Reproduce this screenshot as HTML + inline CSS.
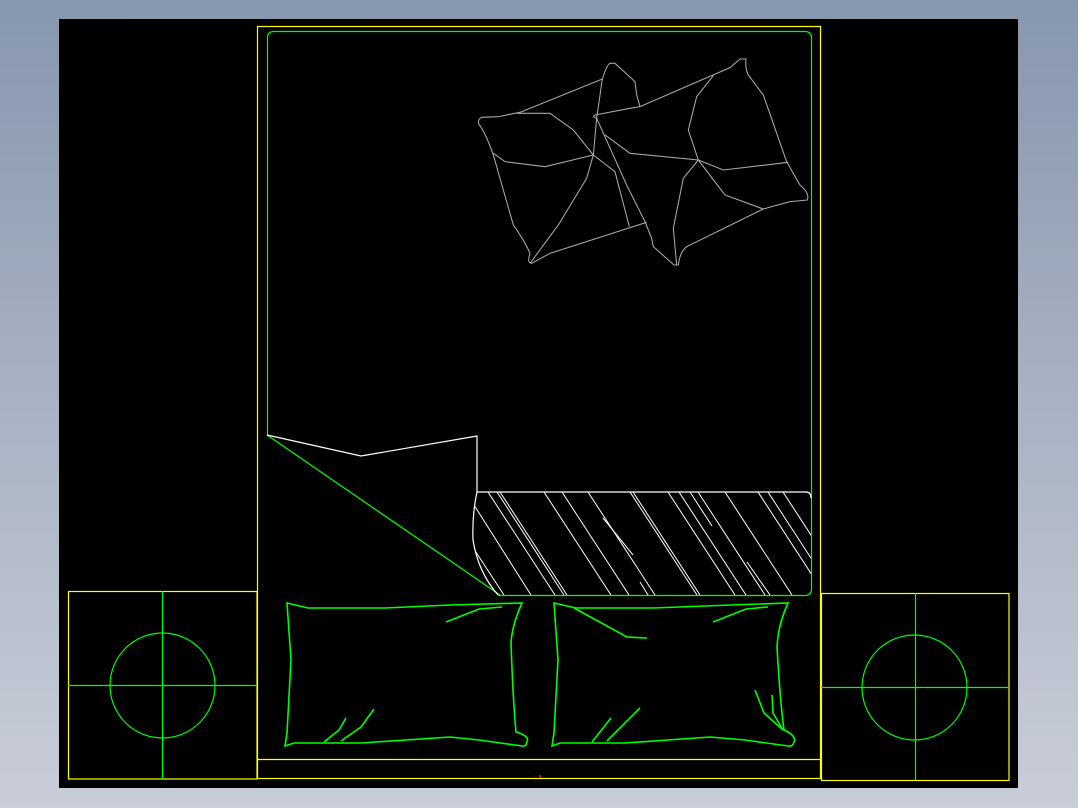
<!DOCTYPE html>
<html><head><meta charset="utf-8"><style>
html,body{margin:0;padding:0;width:1078px;height:808px;overflow:hidden;background:linear-gradient(#8797ad,#c9cdd8);}
svg{position:absolute;left:0;top:0}
</style></head><body>
<svg width="1078" height="808" viewBox="0 0 1078 808">
<defs><clipPath id="hc"><path d="M477,492 L806,492 Q811,492 811,498 L811,589 Q811,595 805,595 L498,595 Q480,575 473,540 Q472,515 477,492Z"/></clipPath></defs>
<rect x="59" y="19" width="959" height="769" fill="#000"/>
<g fill="none" stroke-width="1.2">
<!-- bed frame -->
<rect x="257.5" y="26.5" width="563" height="752" stroke="#ffff00"/>
<line x1="257" y1="759.5" x2="821" y2="759.5" stroke="#ffff00"/>
<path d="M267.5,435 L267.5,38 Q267.5,31.5 274,31.5 L805,31.5 Q811.5,31.5 811.5,38 L811.5,589 Q811.5,595.5 805,595.5 L498,595.5" stroke="#00ff00"/>
<line x1="267" y1="435" x2="500" y2="595" stroke="#00ff00"/>
<!-- sheet -->
<path d="M267,435 L361,456 L477,436 L477,492 L806,492 Q811,492 811,498" stroke="#fff"/>
<path d="M477,492 Q472,515 473,540 Q478,572 498,595" stroke="#fff"/>
<g clip-path="url(#hc)" stroke="#fff" stroke-width="1">
<line x1="488" y1="492" x2="555" y2="595"/><line x1="497" y1="492" x2="564" y2="595"/><line x1="500" y1="492" x2="567" y2="595"/>
<line x1="474" y1="505" x2="531" y2="595"/><line x1="468" y1="540" x2="504" y2="595"/>
<line x1="544" y1="492" x2="611" y2="595"/><line x1="562" y1="492" x2="629" y2="595"/><line x1="588" y1="492" x2="655" y2="595"/>
<line x1="603" y1="518" x2="633" y2="555"/>
<line x1="630" y1="492" x2="697" y2="595"/><line x1="633" y1="492" x2="700" y2="595"/>
<line x1="668" y1="492" x2="735" y2="595"/><line x1="679" y1="492" x2="746" y2="595"/><line x1="698" y1="492" x2="765" y2="595"/>
<line x1="725" y1="492" x2="792" y2="595"/><line x1="758" y1="492" x2="825" y2="595"/><line x1="768" y1="492" x2="835" y2="595"/>
<line x1="783" y1="492" x2="850" y2="595"/><line x1="690" y1="492" x2="712" y2="526"/>
<line x1="747" y1="562" x2="770" y2="595"/><line x1="640" y1="582" x2="648" y2="595"/>
</g>
<!-- back pillows -->
<g transform="translate(470,55) scale(0.3333)" stroke="#a8a8a8" stroke-width="3.2">
<path d="M85,185 L150,172 L397,72 Q410,30 420,25 L435,25 L495,80 L500,120 L510,155"/>
<path d="M85,185 L35,187 Q20,195 28,210 Q45,230 70,300 L130,510 Q165,560 180,595 Q170,625 185,625 L240,595 L530,502"/>
<path d="M140,175 L240,175 L310,225 L370,300"/>
<path d="M70,295 L105,320 L225,335 L370,300"/>
<path d="M370,300 L350,370 L265,510 L180,625"/>
<path d="M370,300 L380,190 L397,72"/>
<path d="M370,300 L435,350 L478,515"/>
<path d="M380,190 Q365,185 375,180 L480,160 L510,155 L780,38 L810,12 L828,12 Q825,40 835,60 L880,120 L950,320 L990,390 Q1020,415 1012,435 L960,440 L880,462 L650,575 Q630,590 625,630 L612,630 L550,575 L545,550 L525,500 L470,390 L380,190Z"/>
<path d="M405,240 L480,295 L685,315 L760,345 L955,322"/>
<path d="M685,315 L655,225 L680,125 L730,62"/>
<path d="M685,315 L640,370 L610,520 L620,630"/>
<path d="M685,315 L765,420 L880,462"/>
</g>
<!-- front pillows -->
<g stroke="#00ff00" stroke-width="1.6">
<path d="M287,603 L308,608 L385,608 L450,605 L522,603 Q512,625 511,643 Q513,700 516,732 Q530,736 527,742 Q526,747 522,746 L479,740 L450,737 L361,743 L294,743 L285,746 L287,733 L291,660 L287,603Z"/>
<path d="M446,622 L479,609 L502,607"/>
<path d="M324,742 L339,730 L346,718"/><path d="M341,741 L361,727 L374,709"/>
<path d="M554,603 L576,608 L653,608 L731,605 L788,603 Q778,625 777,647 Q780,700 784,730 Q797,736 794,742 Q793,747 788,746 L745,740 L710,737 L625,743 L560,743 L552,746 L554,733 L558,660 L554,603Z"/>
<path d="M574,608 L627,637 L647,638"/><path d="M713,622 L746,609 L768,607"/>
<path d="M592,742 L611,718"/><path d="M607,741 L640,708"/>
<path d="M755,690 L764,713 L783,730"/><path d="M772,695 L773,713 L783,730"/>
</g>
<!-- nightstands -->
<rect x="68.5" y="591.5" width="188.5" height="187.5" stroke="#ffff00"/>
<line x1="68" y1="685.5" x2="257" y2="685.5" stroke="#00ff00"/>
<line x1="162.5" y1="591" x2="162.5" y2="779" stroke="#00ff00"/>
<circle cx="162.5" cy="685.5" r="52.5" stroke="#00ff00"/>
<rect x="821.5" y="593.5" width="187.5" height="187" stroke="#ffff00"/>
<line x1="821" y1="687.5" x2="1009" y2="687.5" stroke="#00ff00"/>
<line x1="915.5" y1="593" x2="915.5" y2="780" stroke="#00ff00"/>
<circle cx="914.5" cy="687.5" r="52.5" stroke="#00ff00"/>
</g>
<rect x="539" y="775" width="2" height="3" fill="#ff0000"/>
</svg>
</body></html>
